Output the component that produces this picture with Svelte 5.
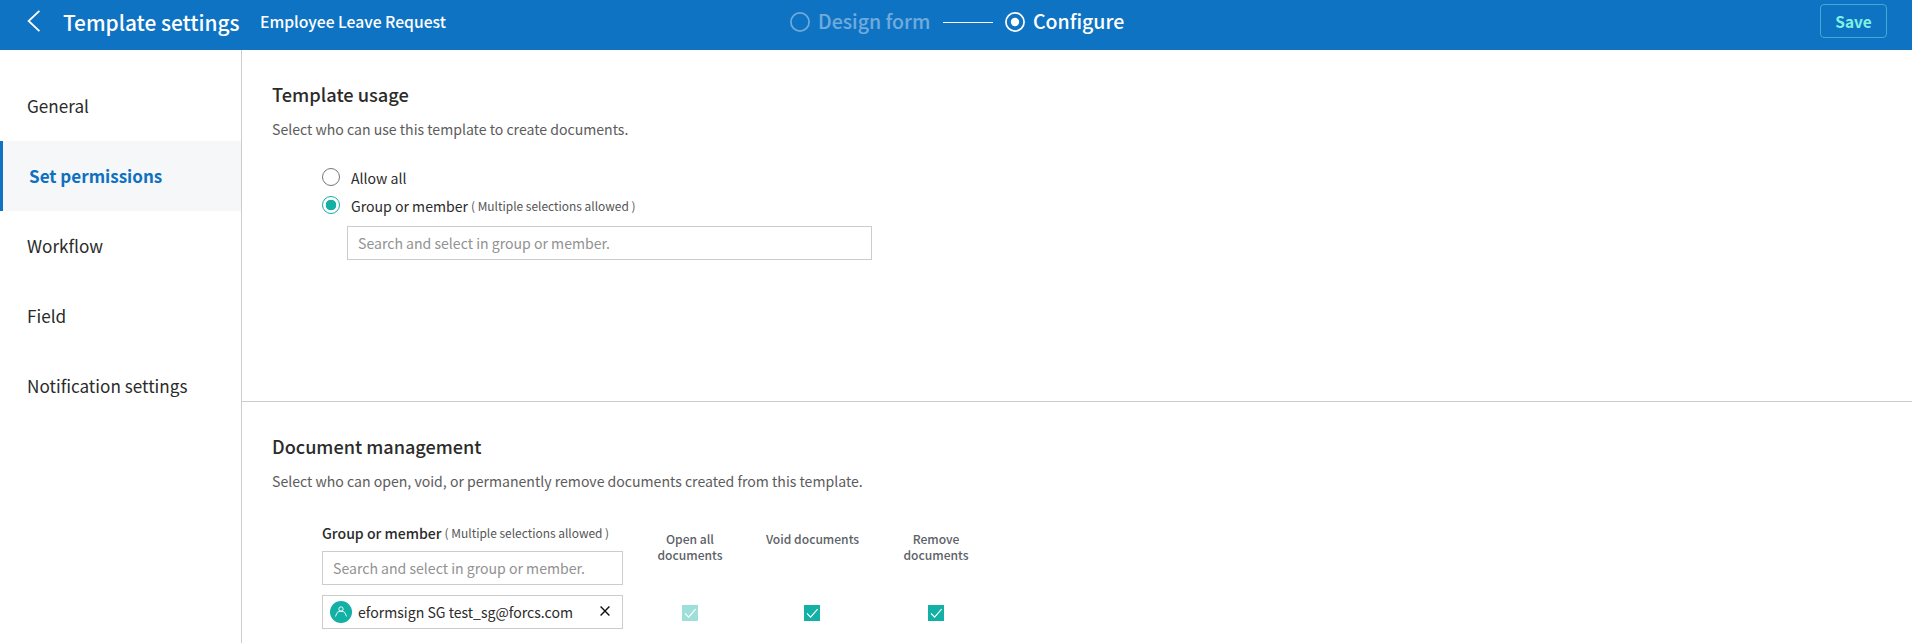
<script>
  const menu = ['General', 'Set permissions', 'Workflow', 'Field', 'Notification settings'];
  let active = $state('Set permissions');
  let usage = $state('group');
  const permissions = [
    { label: 'Open all documents', locked: true },
    { label: 'Void documents', locked: false },
    { label: 'Remove documents', locked: false }
  ];
</script>

<div class="app">
  <header>
    <div class="lead">
      <svg class="back" width="14" height="24" viewBox="0 0 14 24"><path d="M12.400 1.800 1.600 12l10.800 10.200" /></svg>
      <h1>Template settings</h1>
      <span class="name">Employee Leave Request</span>
    </div>
    <div class="steps">
      <svg class="ring dim" width="20" height="20" viewBox="0 0 20 20"><circle cx="10" cy="10" r="9.1" /></svg>
      <span class="step design dim">Design form</span>
      <i class="link"></i>
      <svg class="ring" width="20" height="20" viewBox="0 0 20 20"><circle cx="10" cy="10" r="9.1" /><circle class="dot" cx="10" cy="10" r="4.2" /></svg>
      <span class="step">Configure</span>
    </div>
    <button class="save">Save</button>
  </header>

  <div class="body">
    <nav>
      {#each menu as item}
        <button class="item" class:active={item === active} onclick={() => (active = item)}>{item}</button>
      {/each}
    </nav>

    <main>
      <section class="usage">
        <h2>Template usage</h2>
        <p>Select who can use this template to create documents.</p>
        <div class="options">
          <button class="option" onclick={() => (usage = 'all')}>
            <span class="radio" class:on={usage === 'all'}></span><span>Allow all</span>
          </button>
          <button class="option" onclick={() => (usage = 'group')}>
            <span class="radio" class:on={usage === 'group'}></span><span>Group or member</span><span class="hint">( Multiple selections allowed )</span>
          </button>
          <div class="field wide"><span class="placeholder">Search and select in group or member.</span></div>
        </div>
      </section>

      <section class="management">
        <h2>Document management</h2>
        <p>Select who can open, void, or permanently remove documents created from this template.</p>
        <div class="grid">
          <div class="members">
            <div class="caption"><span class="strong">Group or member</span><span class="hint">( Multiple selections allowed )</span></div>
            <div class="field"><span class="placeholder">Search and select in group or member.</span></div>
            <div class="field chip">
              <svg width="22" height="22" viewBox="0 0 22 22">
                <circle cx="11" cy="11" r="11" fill="#12b0a5" />
                <g fill="none" stroke="#fff" stroke-width="0.9"><circle cx="11" cy="8" r="2.2" /><path d="M5.400 15.500l2-4.200c1.800-1.500 5.400-1.500 7.200 0l2 4.200" /></g>
              </svg>
              <span class="member">eformsign SG test_sg@forcs.com</span>
              <svg class="remove" width="10" height="10" viewBox="0 0 10 10"><path d="M.6.6l8.800 8.800M9.400.6.6 9.400" /></svg>
            </div>
          </div>
          {#each permissions as p, i}
            <div class="perm p{i}">
              <div class="head">{p.label}</div>
              <svg class="check" class:locked={p.locked} width="16" height="16" viewBox="0 0 16 16">
                <rect width="16" height="16" /><path d="M3 8.400l3.600 3.800 7-8" />
              </svg>
            </div>
          {/each}
        </div>
      </section>
    </main>
  </div>
</div>

<style>
  :global(body) { margin: 0; overflow: hidden; background: #fff; }
  .app { height: 643px; overflow: hidden; display: flex; flex-direction: column; font-family: "Noto Sans CJK KR", "Noto Sans CJK SC", sans-serif; color: #2b2b2b; white-space: nowrap; }
  h1, h2, p { margin: 0; font-weight: 500; }
  button { font: inherit; color: inherit; border: 0; background: none; padding: 0; margin: 0; text-align: left; cursor: pointer; }
  header { height: 50px; flex: none; background: #0f73c4; color: #fff; display: grid; grid-template-columns: 790px 1fr auto; align-items: start; box-sizing: border-box; padding-right: 25px; }
  .lead { display: flex; align-items: center; height: 42px; }
  .back { margin-left: 27px; width: 14px; flex: none; fill: none; stroke: #fff; stroke-width: 1.8; }
  h1 { margin-left: 22px; width: 197px; font-size: 20.85px; line-height: 42px; padding-top: 2px; }
  .name { font-size: 15.7px; font-weight: 500; line-height: 42px; padding-top: 2px; }
  .steps { display: flex; align-items: center; height: 44px; }
  .ring { flex: none; fill: none; stroke: #fff; stroke-width: 1.700; }
  .ring .dot { fill: #fff; stroke: none; }
  .step { font-size: 19.5px; font-weight: 500; line-height: 42px; height: 44px; margin-left: 8px; }
  .design { width: 125px; }
  .dim { opacity: .4; }
  .link { width: 50px; height: 1px; background: #fff; margin-right: 12px; }
  .save { box-sizing: border-box; width: 67px; height: 34px; border: 1px solid #45a9d4; border-radius: 4px; color: #80f0e2; font-size: 15.4px; font-weight: 700; text-align: center; line-height: 33px; margin-top: 4px; }

  .body { flex: 1; display: flex; min-height: 0; }
  nav { width: 241px; flex: none; border-right: 1px solid #ccc; padding-top: 21px; }
  .item { display: block; width: 241px; height: 70px; box-sizing: border-box; padding-left: 27px; font-size: 17.15px; line-height: 70px; }
  .item.active { background: #f5f7f9; border-left: 3px solid #0f73c4; padding-left: 26px; color: #0f6fc0; font-weight: 700; font-size: 17.05px; }
  main { flex: 1; min-width: 0; }
  section { padding-left: 30px; box-sizing: border-box; }
  .usage { height: 352px; padding-top: 30px; border-bottom: 1px solid #ccc; }
  .management { padding-top: 30px; }
  h2 { font-size: 18.1px; line-height: 28px; }
  .usage h2 { font-size: 18.25px; }
  p { font-size: 14.08px; line-height: 22px; margin-top: 10px; color: #5c5c5c; font-weight: 400; }
  .options { margin: 23px 0 0 50px; }
  .option { display: flex; align-items: center; height: 28px; font-size: 14.08px; line-height: 28px; }
  .option span:not(.radio) { padding-top: 1px; }
  .radio { box-sizing: border-box; width: 18px; height: 18px; border: 1px solid #777; border-radius: 50%; margin-right: 11px; }
  .radio.on { border-color: #12b0a5; background: radial-gradient(circle, #12b0a5 5px, #fff 5.600px); }
  .hint { font-size: 11.95px; color: #555; margin-left: 3px; }
  .field { box-sizing: border-box; height: 34px; border: 1px solid #ccc; padding-left: 10px; font-size: 14.08px; line-height: 32px; display: flex; align-items: center; }
  .field.wide { width: 525px; margin: 7px 0 0 25px; }
  .placeholder { color: #929292; }
  .grid { display: flex; padding-left: 50px; margin-top: 29px; }
  .members { width: 301px; }
  .caption { display: flex; font-size: 14.08px; line-height: 24px; height: 30px; }
  .strong { font-weight: 500; }
  .chip { margin-top: 10px; padding: 0 12px 0 7px; }
  .member { margin-left: 6px; flex: 1; }
  .remove { flex: none; fill: none; stroke: #111; stroke-width: 1.400; margin: 0 0 3px; }
  .perm { display: flex; flex-direction: column; align-items: center; margin-top: 10px; }
  .p0 { width: 76px; margin-left: 29px; }
  .p1 { width: 110px; margin-left: 29px; }
  .p2 { width: 76px; margin-left: 31px; }
  .head { height: 74px; font-size: 12.08px; font-weight: 500; line-height: 16px; text-align: center; white-space: normal; color: #5c6166; }
  .p1 .head { padding-left: 1px; }
  .check { fill: #12b0a5; }
  .check path { fill: none; stroke: #fff; stroke-width: 1.200; }
  .locked { opacity: .4; }
</style>
